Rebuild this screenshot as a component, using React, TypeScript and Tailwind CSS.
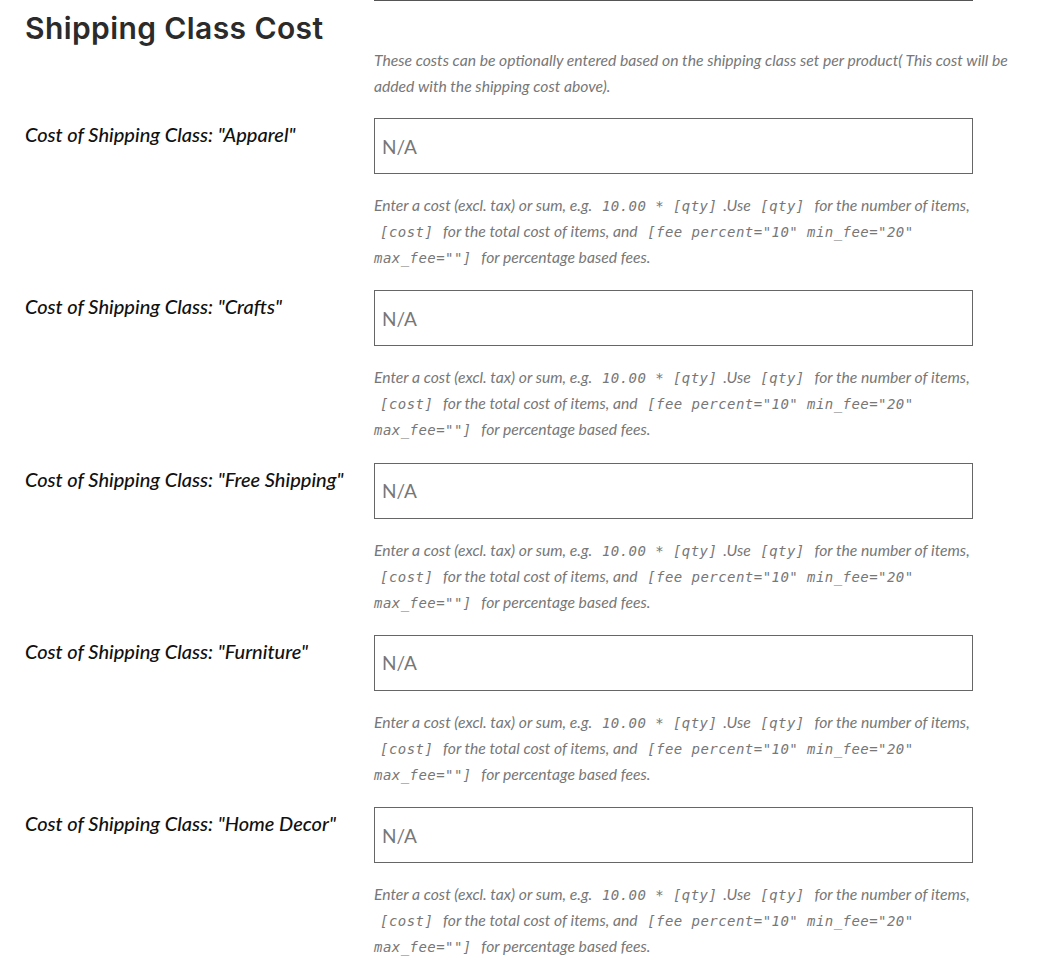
import React from 'react'

const classes = ['Apparel', 'Crafts', 'Free Shipping', 'Furniture', 'Home Decor']

function Code({ children }: { children: React.ReactNode }) {
  return (
    <code className="px-[6px] font-['DejaVu_Sans_Mono',monospace] text-[14px] leading-none italic tracking-[0.45px] text-[#777]">
      {children}
    </code>
  )
}

function CostRow({ name }: { name: string }) {
  return (
    <div className="flex">
      {/* label column */}
      <div className="w-[349px] shrink-0 pt-[4px]">
        <label className="text-[20px] leading-[24px] font-medium italic text-[#111]">
          Cost of Shipping Class: "{name}"
        </label>
      </div>
      {/* field column */}
      <div className="flex-1 pb-[20.25px]">
        <input
          type="text"
          placeholder="N/A"
          className="h-[56px] w-[599px] border border-[#666] bg-white px-[7px] text-[19px] text-[#777] placeholder:text-[#777] focus:outline-none"
        />
        <p className="mt-[18px] w-[606px] text-[15.7px] leading-[26px] italic text-[#777]">
          Enter a cost (excl. tax) or sum, e.g. <Code>10.00 * [qty]</Code>.Use <Code>[qty]</Code> for the number of
          items, <Code>[cost]</Code> for the total cost of items, and{' '}
          <Code>[fee percent="10" min_fee="20" max_fee=""]</Code> for percentage based fees.
        </p>
      </div>
    </div>
  )
}

export default function App() {
  return (
    <div className="min-h-screen bg-white pl-[25px] pr-[25px] font-['Lato','Liberation_Sans',sans-serif]">
      {/* section header */}
      <div className="flex">
        <div className="w-[349px] shrink-0">
          <h2 className="mt-[8px] font-['Inter',sans-serif] text-[30px] leading-[40px] font-semibold tracking-[0.4px] text-[#2b2b2b]">
            Shipping Class Cost
          </h2>
        </div>
        <div className="flex-1">
          <div className="h-px w-[599px] bg-[#555]" />
          <p className="pt-[46px] text-[15.7px] leading-[26px] italic text-[#777]">
            These costs can be optionally entered based on the shipping class set per product( This cost will be added
            with the shipping cost above).
          </p>
        </div>
      </div>

      <div className="mt-[19px]">
        {classes.map(c => (
          <CostRow key={c} name={c} />
        ))}
      </div>
    </div>
  )
}
